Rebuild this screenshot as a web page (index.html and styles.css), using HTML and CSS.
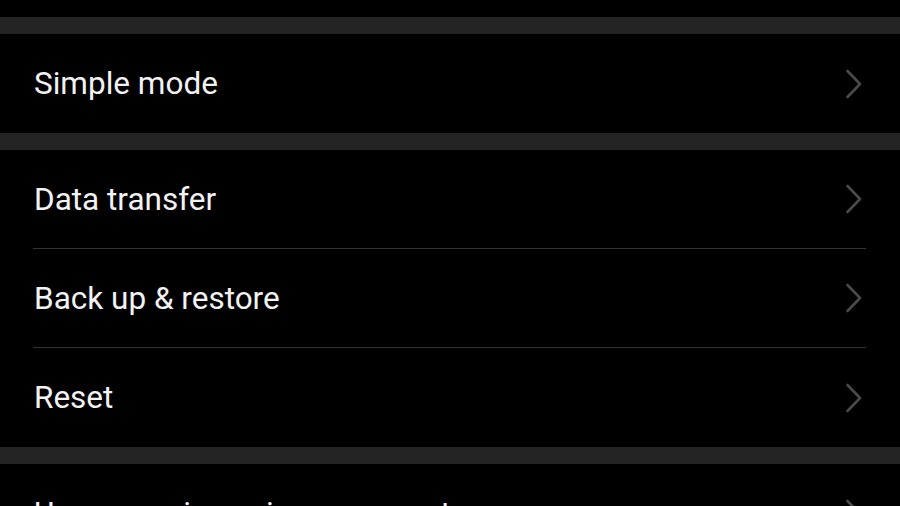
FILE: index.html
```html
<!DOCTYPE html>
<html lang="en">
<head>
<meta charset="utf-8">
<title>System</title>
<link rel="stylesheet" href="styles.css">
</head>
<body>
<div class="screen">
  <div class="top-space"></div>
  <div class="band"></div>
  <section class="group">
    <div class="row"><span class="label">Simple mode</span><svg class="chev" viewBox="0 0 18 30" width="18" height="30"><polyline points="2.5,2 15,15 2.5,28"/></svg></div>
  </section>
  <div class="band"></div>
  <section class="group">
    <div class="row"><span class="label">Data transfer</span><svg class="chev" viewBox="0 0 18 30" width="18" height="30"><polyline points="2.5,2 15,15 2.5,28"/></svg></div>
    <div class="row"><span class="label">Back up &amp; restore</span><svg class="chev" viewBox="0 0 18 30" width="18" height="30"><polyline points="2.5,2 15,15 2.5,28"/></svg></div>
    <div class="row"><span class="label">Reset</span><svg class="chev" viewBox="0 0 18 30" width="18" height="30"><polyline points="2.5,2 15,15 2.5,28"/></svg></div>
  </section>
  <div class="band"></div>
  <section class="group">
    <div class="row"><span class="label">User experience improvement program</span><svg class="chev" viewBox="0 0 18 30" width="18" height="30"><polyline points="2.5,2 15,15 2.5,28"/></svg></div>
  </section>
</div>
</body>
</html>
```

FILE: styles.css
```css
html, body {
  margin: 0;
  padding: 0;
  background: #000;
}
.screen {
  width: 900px;
  height: 506px;
  overflow: hidden;
  background: #000;
  font-family: Roboto, "Noto Sans", sans-serif;
}
.top-space {
  height: 17px;
}
.band {
  height: 17px;
  background: #242424;
}
.group {
  padding: 0 34px 0 33px;
}
.row {
  height: 98px;
  display: flex;
  align-items: center;
  justify-content: space-between;
  border-top: 1px solid #333;
}
.row:first-child {
  border-top: none;
}
.row:last-child {
  height: 99px;
}
.label {
  color: #f2f2f2;
  font-size: 31.5px;
  line-height: 37px;
  padding-left: 1px;
  white-space: nowrap;
}
.chev {
  margin-right: 3px;
  flex: none;
}
.chev polyline {
  fill: none;
  stroke: #4a4a4a;
  stroke-width: 2.6;
  stroke-linecap: round;
  stroke-linejoin: round;
}
```
